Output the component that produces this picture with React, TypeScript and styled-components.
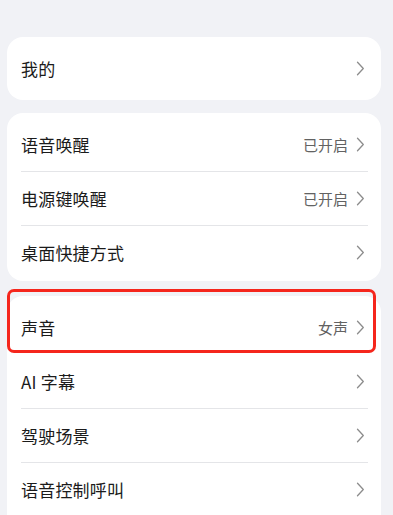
import * as React from 'react';
import styled, { createGlobalStyle } from 'styled-components';

const GlobalStyle = createGlobalStyle`
  html, body {
    margin: 0;
    padding: 0;
    background: #f1f2f6;
  }
  body {
    font-family: "Noto Sans CJK SC", "Noto Sans", sans-serif;
    -webkit-font-smoothing: antialiased;
  }
`;

interface Item {
  label: string;
  value?: string;
  highlighted?: boolean;
}

interface Group {
  items: Item[];
  spaceAbove: number;
}

const Page = styled.div`
  display: flex;
  flex-direction: column;
  padding: 37px 12px 0 7px;
  height: 515px;
  box-sizing: border-box;
  overflow: hidden;
`;

const Card = styled.div<{ $single?: boolean; $spaceAbove: number }>`
  flex-shrink: 0;
  background: #ffffff;
  border-radius: 16px;
  margin-top: ${(p) => p.$spaceAbove}px;
  padding: ${(p) => (p.$single ? '4px 0 5px' : '4px 0 2px')};
`;

const Row = styled.div<{ $highlighted?: boolean }>`
  position: relative;
  display: flex;
  align-items: center;
  height: 54px;
  padding: 0 16px 0 14px;

  & + & > .inner {
    box-shadow: inset 0 1px 0 #e4e5e8;
  }

  ${(p) =>
    p.$highlighted &&
    `
    &::after {
      content: '';
      position: absolute;
      top: -11px;
      left: 0;
      right: 5px;
      bottom: 1px;
      border: 3px solid #f5261c;
      border-radius: 7px;
      pointer-events: none;
    }
  `}
`;

const Inner = styled.div`
  flex: 1;
  display: flex;
  align-items: center;
  height: 100%;
  margin-right: -3px;
  padding-right: 3px;
`;

const Label = styled.span`
  flex: 1;
  font-size: 17px;
  color: #1b1b1b;
  letter-spacing: 0.2px;
`;

const Value = styled.span`
  font-size: 15px;
  color: #626262;
  margin-right: 8px;
`;

const Chevron = () => (
  <svg width="9" height="15" viewBox="0 0 9 15" fill="none">
    <path
      d="M1.5 1.2 L7.3 7.5 L1.5 13.8"
      stroke="#8c8c8c"
      strokeWidth="1.3"
      strokeLinecap="round"
      strokeLinejoin="round"
    />
  </svg>
);

const groups: Group[] = [
  { spaceAbove: 0, items: [{ label: '我的' }] },
  {
    spaceAbove: 13,
    items: [
      { label: '语音唤醒', value: '已开启' },
      { label: '电源键唤醒', value: '已开启' },
      { label: '桌面快捷方式' },
    ],
  },
  {
    spaceAbove: 15,
    items: [
      { label: '声音', value: '女声', highlighted: true },
      { label: 'AI 字幕' },
      { label: '驾驶场景' },
      { label: '语音控制呼叫' },
      { label: '' },
    ],
  },
];

const SettingsRow: React.FC<{ item: Item }> = ({ item }) => (
  <Row $highlighted={item.highlighted}>
    <Inner className="inner">
      <Label>{item.label}</Label>
      {item.value && <Value>{item.value}</Value>}
      {item.label && <Chevron />}
    </Inner>
  </Row>
);

export default function App() {
  return (
    <>
      <GlobalStyle />
      <Page>
        {groups.map((g, i) => (
          <Card key={i} $single={g.items.length === 1} $spaceAbove={g.spaceAbove}>
            {g.items.map((item, j) => (
              <SettingsRow key={j} item={item} />
            ))}
          </Card>
        ))}
      </Page>
    </>
  );
}
